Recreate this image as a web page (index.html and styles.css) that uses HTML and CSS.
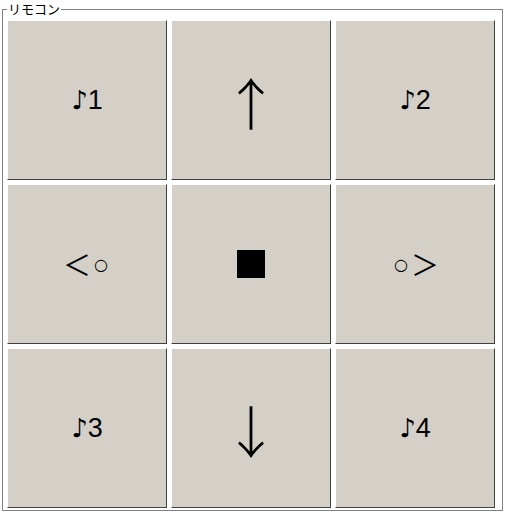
FILE: index.html
```html
<!DOCTYPE html>
<html lang="ja">
<head>
<meta charset="utf-8">
<title>リモコン</title>
<link rel="stylesheet" href="styles.css">
</head>
<body>
<fieldset class="remote">
  <legend class="remote-title">リモコン</legend>
  <div class="pad">
    <button class="key"><span class="note">♪</span>1</button>
    <button class="key arrow">↑</button>
    <button class="key"><span class="note">♪</span>2</button>
    <button class="key side"><span class="lt">＜</span><span class="ring">○</span></button>
    <button class="key stop"><span class="square"></span></button>
    <button class="key side"><span class="ring">○</span><span class="lt">＞</span></button>
    <button class="key"><span class="note">♪</span>3</button>
    <button class="key arrow">↓</button>
    <button class="key"><span class="note">♪</span>4</button>
  </div>
</fieldset>
</body>
</html>
```
FILE: styles.css
```css
html, body {
  margin: 0;
  padding: 0;
  background: #fff;
}
body {
  font-family: "Noto Sans CJK JP", "Liberation Sans", sans-serif;
}
.remote {
  margin: 0 2px;
  padding: 2px 4px 2px 4px;
  border: 1px solid #808080;
}
.remote-title {
  font-size: 13px;
  line-height: 18px;
  padding: 0 1px;
  margin-left: 0;
  color: #000;
}
.pad {
  display: grid;
  grid-template-columns: repeat(3, 160px);
  grid-template-rows: repeat(3, 160px);
  gap: 4px;
}
.key {
  margin: 0;
  padding: 0;
  background: #d4d0c8;
  border: 1px solid;
  border-color: #fff #404040 #404040 #fff;
  display: flex;
  align-items: center;
  justify-content: center;
  font-family: "Liberation Sans", sans-serif;
  font-size: 27px;
  color: #000;
}
.note {
  font-family: "DejaVu Sans", sans-serif;
  font-size: 26px;
  font-weight: bold;
}
.arrow {
  font-family: "Noto Sans CJK JP", sans-serif;
  font-size: 56px;
  font-weight: 300;
}
.lt {
  font-family: "Noto Sans CJK JP", sans-serif;
  font-size: 28px;
}
.ring {
  font-family: "DejaVu Sans", sans-serif;
  font-size: 16px;
  margin: 0 3px;
}
.square {
  display: block;
  width: 28px;
  height: 28px;
  background: #000;
}
```
